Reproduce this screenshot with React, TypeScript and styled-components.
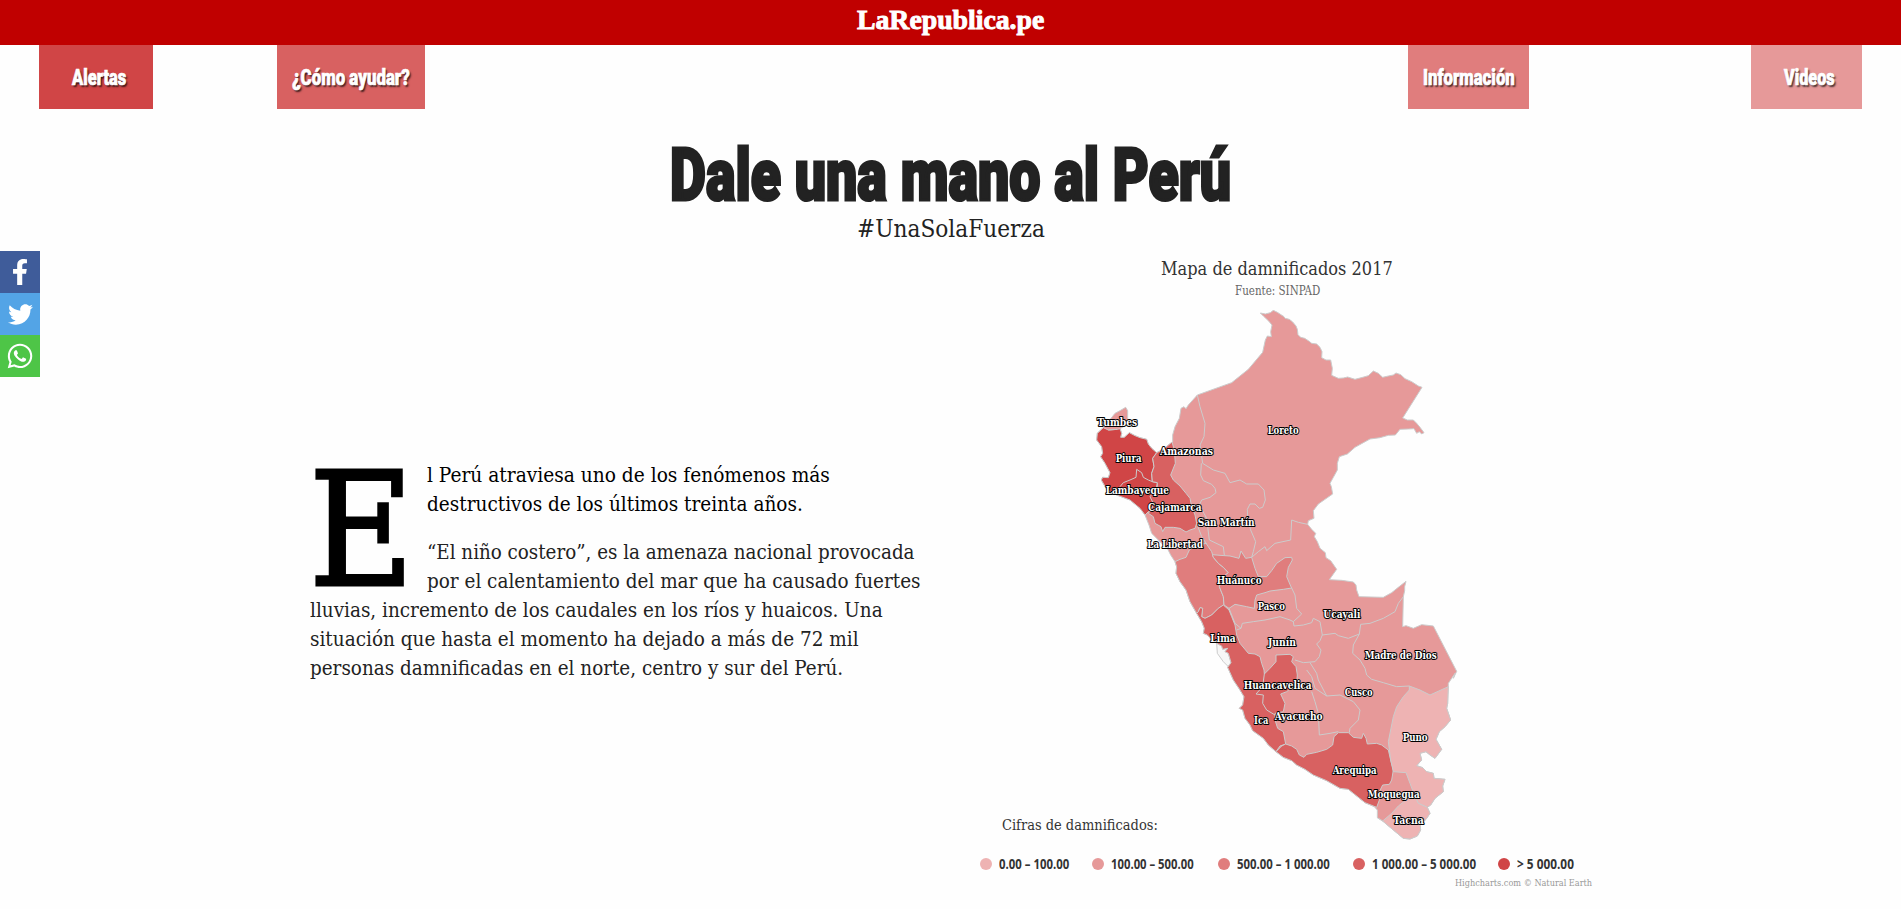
import React, { useLayoutEffect, useRef, useState } from 'react';
import styled, { createGlobalStyle } from 'styled-components';
import { FaFacebookF, FaTwitter, FaWhatsapp } from 'react-icons/fa';

const serif = "'DejaVu Serif Condensed', 'DejaVu Serif', 'Liberation Serif', serif";
const display = "Roboto, 'Liberation Sans', sans-serif";

const Global = createGlobalStyle`
  * { box-sizing: border-box; }
  body { margin: 0; background: #fefefe; color: #222; font-family: ${serif}; font-stretch: condensed; overflow: hidden; }
  p, h1, h2, h3 { margin: 0; font-weight: 400; }
`;

const FitBox = styled.span<{ $w: number }>`
  display: inline-block;
  width: ${(p) => p.$w}px;
  white-space: nowrap;
  vertical-align: top;
  text-align: left;
`;
const FitInner = styled.span`
  display: inline-block;
  vertical-align: top;
  transform-origin: 0 50%;
`;

/* Condenses or widens a line of text so that it takes exactly the given width. */
function Fit({ w, children }: { w: number; children: React.ReactNode }) {
  const ref = useRef<HTMLSpanElement>(null);
  const [k, setK] = useState(1);
  useLayoutEffect(() => {
    if (ref.current) setK(w / ref.current.offsetWidth);
  }, [w]);
  return (
    <FitBox $w={w}>
      <FitInner ref={ref} style={{ transform: `scaleX(${k})` }}>{children}</FitInner>
    </FitBox>
  );
}

const Page = styled.div`
  height: 909px;
  display: flex;
  flex-direction: column;
`;
const TopBar = styled.header`
  height: 45px;
  background: #c00000;
  color: #fff;
  text-align: center;
  padding-top: 3px;
  font: 700 27px/34px 'Liberation Serif', serif;
  -webkit-text-stroke: 0.9px #fff;
`;
const Nav = styled.nav`
  display: flex;
  height: 64px;
  padding-left: 39px;
`;
const NavItem = styled.a<{ $bg: string; $w: number; $gap: number; $pad: number }>`
  width: ${(p) => p.$w}px;
  margin-left: ${(p) => p.$gap}px;
  padding-left: ${(p) => p.$pad}px;
  background: ${(p) => p.$bg};
  color: #fff;
  font: 900 22px/65px ${display};
  -webkit-text-stroke: 0.7px #fff;
  text-shadow: 2px 2px 2px rgba(0, 0, 0, 0.7);
`;
const Title = styled.h1`
  margin-top: 30px;
  height: 74px;
  text-align: center;
  font: 900 73px/72px ${display};
  -webkit-text-stroke: 3px #222;
`;
const Hashtag = styled.h2`
  text-align: center;
  font-size: 24px;
  line-height: 32px;
`;
const Columns = styled.main`
  display: flex;
  flex: 1;
`;
const Article = styled.article`
  flex: none;
  width: 970px;
  padding: 216px 0 0 310px;
  font-size: 19.5px;
  line-height: 29px;
`;
const Intro = styled.div`
  display: flex;
`;
const DropCap = styled.div`
  flex: none;
  width: 117px;
  height: 135px;
  margin-left: -1px;
  margin-right: 1px;
  padding-top: 5px;
  font-size: 158px;
  line-height: 128px;
  color: #000;
  -webkit-text-stroke: 3px #000;
`;
const Lead = styled.p`
  color: #000;
  margin-bottom: 19px;
`;
const Line = styled.span`
  display: block;
  height: 29px;
`;
const Chart = styled.section`
  width: 634px;
  margin-left: -10px;
  display: flex;
  flex-direction: column;
`;
const ChartTitle = styled.h3`
  padding-top: 12px;
  text-align: center;
  font-size: 18px;
  line-height: 24px;
  color: #333;
`;
const ChartSource = styled.p`
  text-align: center;
  font-size: 12px;
  line-height: 21px;
  color: #666;
`;
const MapSvg = styled.svg`
  display: block;
  width: 420px;
  height: 530px;
  margin: 8px 0 0 120px;
`;
const LegendTitle = styled.p`
  margin: -24px 0 0 42px;
  font-size: 14px;
  line-height: 18px;
  color: #333;
`;
const Legend = styled.ul`
  list-style: none;
  display: flex;
  margin: 21px 0 0 20px;
  padding: 0;
`;
const LegendItem = styled.li<{ $w: number }>`
  display: flex;
  align-items: center;
  gap: 7px;
  width: ${(p) => p.$w}px;
  font: 700 13.5px/18px 'Open Sans', 'Noto Sans', sans-serif;
  color: #333;
`;
const Dot = styled.i<{ $c: string }>`
  width: 12px;
  height: 12px;
  border-radius: 50%;
  background: ${(p) => p.$c};
`;
const Credits = styled.p`
  text-align: right;
  padding-right: 2px;
  font-size: 9px;
  line-height: 12px;
  margin-top: 4px;
  color: #999;
`;
const Share = styled.aside`
  position: fixed;
  left: 0;
  top: 251px;
`;
const ShareLink = styled.a<{ $bg: string }>`
  display: flex;
  align-items: center;
  justify-content: center;
  width: 40px;
  height: 42px;
  background: ${(p) => p.$bg};
  color: #fff;
`;

const C1 = '#eeb3b3';
const C2 = '#e69999';
const C3 = '#e07d7d';
const C4 = '#d86161';
const C5 = '#d04546';

const country =
  '541,69 556,72 571,68 580,61 592,67 612,80 615,85 628,88 638,96 648,108 652,118 654,134 662,142 674,145 685,152 695,160 710,162 720,172 726,185 725,203 738,210 752,210 757,235 755,256 775,265 790,264 803,261 825,268 848,262 865,257 880,243 895,250 908,262 925,258 940,255 948,249 962,254 975,266 995,275 1015,288 1026,292 968,384 982,390 1000,390 1010,400 1020,412 1032,428 1025,432 1018,425 1010,430 1002,416 985,417 960,418 946,435 925,436 900,443 870,447 850,458 825,472 802,492 778,500 772,520 772,540 760,562 750,580 754,590 758,612 735,628 715,642 700,662 702,685 685,692 683,703 695,718 707,730 703,740 712,755 720,775 736,788 738,803 752,812 770,838 748,869 785,871 820,876 828,885 830,900 837,920 910,922 935,908 955,892 978,874 974,890 974,902 970,920 968,1010 978,1007 1000,1015 1025,1004 1060,1008 1130,1144 1120,1165 1125,1150 1105,1180 1103,1240 1100,1255 1112,1290 1095,1310 1078,1325 1068,1348 1085,1378 1065,1405 1050,1395 1038,1385 1020,1390 1025,1410 1010,1427 1028,1433 1040,1445 1060,1450 1062,1465 1095,1468 1088,1488 1090,1505 1065,1525 1052,1545 1042,1552 1050,1570 1038,1588 1020,1605 1022,1620 1012,1638 990,1647 970,1645 940,1620 908,1593 892,1583 892,1560 883,1550 855,1538 820,1510 805,1498 780,1495 740,1472 700,1455 675,1438 650,1425 635,1412 610,1402 585,1383 565,1365 550,1345 518,1322 510,1305 495,1285 488,1260 478,1255 488,1245 492,1220 480,1200 460,1170 443,1132 453,1118 445,1090 435,1085 443,1075 428,1078 425,1068 410,1060 395,1050 382,1035 370,1030 373,1015 365,995 350,970 330,935 318,900 300,875 288,850 290,830 285,815 272,795 262,775 240,755 215,730 207,705 195,675 180,655 150,630 110,615 80,598 64,570 68,562 85,563 90,548 75,520 62,500 68,490 65,470 50,450 52,430 70,412 85,395 105,370 120,362 137,352 143,362 143,385 148,400 120,416 125,430 122,442 133,442 148,428 165,437 180,443 200,448 205,462 215,475 230,488 250,478 278,455 278,435 285,410 298,385 303,355 312,350 318,356 325,345 352,315 455,278 505,238 548,187 556,150 562,138 574,140 572,125 576,105 565,92 550,78';

const regions: [string, string][] = [
  [C5, '52,430 70,413 85,420 112,418 120,416 125,430 122,442 133,442 148,428 165,437 180,443 200,448 205,462 215,475 230,488 218,505 222,530 215,550 217,575 232,578 225,620 222,645 205,665 195,675 180,655 150,630 110,615 80,598 64,570 68,562 85,563 90,548 75,520 62,500 68,490 65,470 50,450'],
  [C4, '230,488 250,478 276,456 283,480 286,520 272,555 280,570 300,588 318,610 330,625 335,650 345,675 350,700 345,715 330,720 318,726 300,715 280,712 255,712 248,725 243,710 225,700 220,680 205,670 222,645 210,620 232,590 232,578 217,575 215,550 222,530 218,505'],
  [C3, '285,815 300,808 318,802 328,780 345,768 378,760 395,785 400,802 415,820 430,832 445,848 430,860 418,890 430,920 432,945 415,955 395,975 375,985 365,980 368,955 360,953 355,965 350,970 330,935 318,900 300,875 288,850 290,830'],
  [C3, '397,794 420,796 450,798 477,805 483,783 497,805 515,802 525,835 535,860 560,860 575,842 590,820 615,803 635,802 637,810 625,832 620,860 632,888 635,894 610,898 570,903 555,908 530,915 525,930 523,955 500,950 465,943 447,955 432,945 430,920 418,890 430,860 445,848 430,832 415,820 400,802'],
  [C4, '350,970 355,965 360,953 368,955 365,980 375,985 395,975 415,955 430,945 447,960 455,980 465,1005 470,1035 480,1060 505,1090 525,1092 540,1100 545,1120 552,1140 553,1152 570,1135 588,1115 588,1095 630,1093 640,1100 635,1115 648,1130 652,1155 650,1180 620,1205 602,1212 615,1240 610,1265 585,1270 585,1290 593,1315 610,1325 617,1362 600,1368 588,1385 565,1365 550,1345 518,1322 510,1305 495,1285 488,1260 478,1255 488,1245 492,1220 480,1200 460,1170 443,1132 453,1118 445,1090 435,1085 443,1075 428,1078 425,1068 410,1060 395,1050 382,1035 370,1030 373,1015 365,995'],
  [C4, '588,1385 605,1368 617,1362 635,1368 650,1378 658,1395 672,1402 680,1393 710,1387 740,1378 758,1365 762,1340 775,1328 805,1328 820,1342 845,1345 850,1330 858,1345 862,1362 890,1360 905,1365 925,1380 932,1410 940,1440 935,1470 928,1483 908,1485 898,1505 900,1525 890,1552 855,1538 820,1510 805,1498 780,1495 740,1472 700,1455 675,1438 650,1425 635,1412 610,1402'],
  [C1, '988,1188 1020,1200 1050,1215 1105,1190 1103,1240 1100,1255 1112,1290 1095,1310 1078,1325 1068,1348 1085,1378 1065,1405 1050,1395 1038,1385 1020,1390 1025,1410 1010,1427 1028,1433 1040,1445 1060,1450 1062,1465 1095,1468 1088,1488 1090,1505 1065,1525 1052,1545 1042,1552 1015,1540 1005,1520 990,1480 978,1448 940,1445 932,1410 925,1355 932,1320 940,1280 950,1250 970,1220 988,1200'],
  [C1, '908,1593 935,1570 955,1548 985,1525 1005,1520 1015,1540 1042,1552 1050,1570 1038,1588 1020,1605 1022,1620 1012,1638 990,1647 970,1645 940,1620'],
];

const borders = [
  '352,315 360,350 375,400 372,440 360,465 368,520 400,540 435,550 450,578 480,570 500,582 535,582 552,600 556,630 548,652 538,655 525,642 510,642 502,658 503,685 512,720 527,755 520,785 515,802',
  '364,520 362,555 370,572 395,583 405,595 408,608 390,622 365,630 358,645 372,670 380,685 388,750 430,770 433,796',
  '350,700 365,740 380,762',
  '85,420 112,418',
  '120,590 130,578 150,570 168,562 170,538 185,548 190,562 205,570 217,575',
  '515,802 535,785 555,770 560,782 585,760 632,750 635,690 655,697 683,703',
  '635,894 645,915 650,955 665,972 640,995 642,1008 670,1005 695,998 700,985 720,995 727,1035 765,1030 775,1037 805,1045 838,1032 842,1003 870,1000 910,985 945,965 955,940 970,920',
  '838,1032 820,1065 818,1090 840,1110 855,1135 860,1155 875,1168 910,1178 950,1190 988,1188',
  '727,1035 720,1052 710,1062 723,1080 718,1100 705,1115 670,1118 645,1110',
  '690,1118 710,1150 715,1170 740,1218',
  '447,955 455,975 465,1000 483,1015 487,1000 520,995 555,990 600,980 630,990 640,995',
  '470,1020 483,1015',
  '680,1140 695,1160 705,1195 740,1218 780,1215 820,1235 840,1260 835,1290 810,1315 808,1328',
  '695,1205 705,1235 715,1270 718,1335 750,1330 775,1325',
  '553,1152 548,1190 528,1212 550,1215 548,1240 560,1260 585,1275',
  '892,1583 908,1593',
];

const labels: [string, number, number, number][] = [
  ['Tumbes', 50, 174, 408], ['Piura', 105, 187, 516], ['Amazonas', 238, 401, 495], ['Loreto', 561, 658, 432],
  ['Lambayeque', 75, 269, 611], ['Cajamarca', 202, 367, 662], ['San Martín', 351, 526, 708], ['La Libertad', 200, 371, 773],
  ['Huánuco', 408, 547, 883], ['Pasco', 531, 617, 959], ['Lima', 389, 469, 1056], ['Junín', 562, 650, 1067],
  ['Ucayali', 728, 843, 983], ['Madre de Dios', 852, 1072, 1106], ['Huancavelica', 489, 697, 1197], ['Cusco', 792, 880, 1217],
  ['Ica', 520, 567, 1301], ['Ayacucho', 582, 730, 1289], ['Puno', 966, 1045, 1352], ['Arequipa', 756, 892, 1451],
  ['Moquegua', 861, 1021, 1523], ['Tacna', 938, 1033, 1602],
];

const MapLabel = styled.text`
  font: 700 31px ${serif};
  fill: #fff;
  stroke: #000;
  stroke-width: 6px;
  stroke-linejoin: round;
  paint-order: stroke;
`;

const legend: [string, string, number, number][] = [
  [C1, '0.00 – 100.00', 70, 112], [C2, '100.00 – 500.00', 83, 126], [C3, '500.00 – 1 000.00', 93, 135],
  [C4, '1 000.00 – 5 000.00', 104, 145], [C5, '> 5 000.00', 57, 90],
];

export default function App() {
  return (
    <Page>
      <Global />
      <TopBar><Fit w={187}>LaRepublica.pe</Fit></TopBar>
      <Nav>
        <NavItem $bg={C5} $w={114} $gap={0} $pad={33}><Fit w={54}>Alertas</Fit></NavItem>
        <NavItem $bg={C4} $w={148} $gap={124} $pad={15}><Fit w={118}>¿Cómo ayudar?</Fit></NavItem>
        <NavItem $bg={C3} $w={121} $gap={983} $pad={15}><Fit w={92}>Información</Fit></NavItem>
        <NavItem $bg={C2} $w={111} $gap={222} $pad={33}><Fit w={51}>Videos</Fit></NavItem>
      </Nav>
      <Title><Fit w={561}>Dale una mano al Perú</Fit></Title>
      <Hashtag><Fit w={188}>#UnaSolaFuerza</Fit></Hashtag>
      <Columns>
        <Article>
          <Intro>
            <DropCap><Fit w={105}>E</Fit></DropCap>
            <div>
              <Lead>
                <Line><Fit w={403}>l Perú atraviesa uno de los fenómenos más</Fit></Line>
                <Line><Fit w={376}>destructivos de los últimos treinta años.</Fit></Line>
              </Lead>
              <Line><Fit w={488}>“El niño costero”, es la amenaza nacional provocada</Fit></Line>
              <Line><Fit w={493}>por el calentamiento del mar que ha causado fuertes</Fit></Line>
            </div>
          </Intro>
          <Line><Fit w={573}>lluvias, incremento de los caudales en los ríos y huaicos. Una</Fit></Line>
          <Line><Fit w={549}>situación que hasta el momento ha dejado a más de 72 mil</Fit></Line>
          <Line><Fit w={533}>personas damnificadas en el norte, centro y sur del Perú.</Fit></Line>
        </Article>
        <Chart>
          <ChartTitle><Fit w={232}>Mapa de damnificados 2017</Fit></ChartTitle>
          <ChartSource><Fit w={85}>Fuente: SINPAD</Fit></ChartSource>
          <MapSvg viewBox="0 60 1260 1590">
            <g stroke="#ccc" strokeWidth="3" strokeLinejoin="round">
              <polygon points="410,1060 412,1090 430,1115 445,1130 460,1120 450,1070" fill="#f7f7f7" />
              <polygon points={country} fill={C2} />
              {regions.map(([c, pts], i) => <polygon key={i} points={pts} fill={c} />)}
              {borders.map((pts, i) => <polyline key={i} points={pts} fill="none" />)}
            </g>
            {labels.map(([t, a, b, y]) => (
              <MapLabel key={t} x={a + 2} y={y} textLength={b - a - 4} lengthAdjust="spacingAndGlyphs">{t}</MapLabel>
            ))}
          </MapSvg>
          <LegendTitle><Fit w={156}>Cifras de damnificados:</Fit></LegendTitle>
          <Legend>
            {legend.map(([c, t, w, step]) => (
              <LegendItem key={t} $w={step}><Dot $c={c} /><Fit w={w}>{t}</Fit></LegendItem>
            ))}
          </Legend>
          <Credits><Fit w={137}>Highcharts.com © Natural Earth</Fit></Credits>
        </Chart>
      </Columns>
      <Share>
        <ShareLink $bg="#3f5c9a"><FaFacebookF size={26} /></ShareLink>
        <ShareLink $bg="#53a4e6"><FaTwitter size={25} /></ShareLink>
        <ShareLink $bg="#4ec547"><FaWhatsapp size={28} /></ShareLink>
      </Share>
    </Page>
  );
}
